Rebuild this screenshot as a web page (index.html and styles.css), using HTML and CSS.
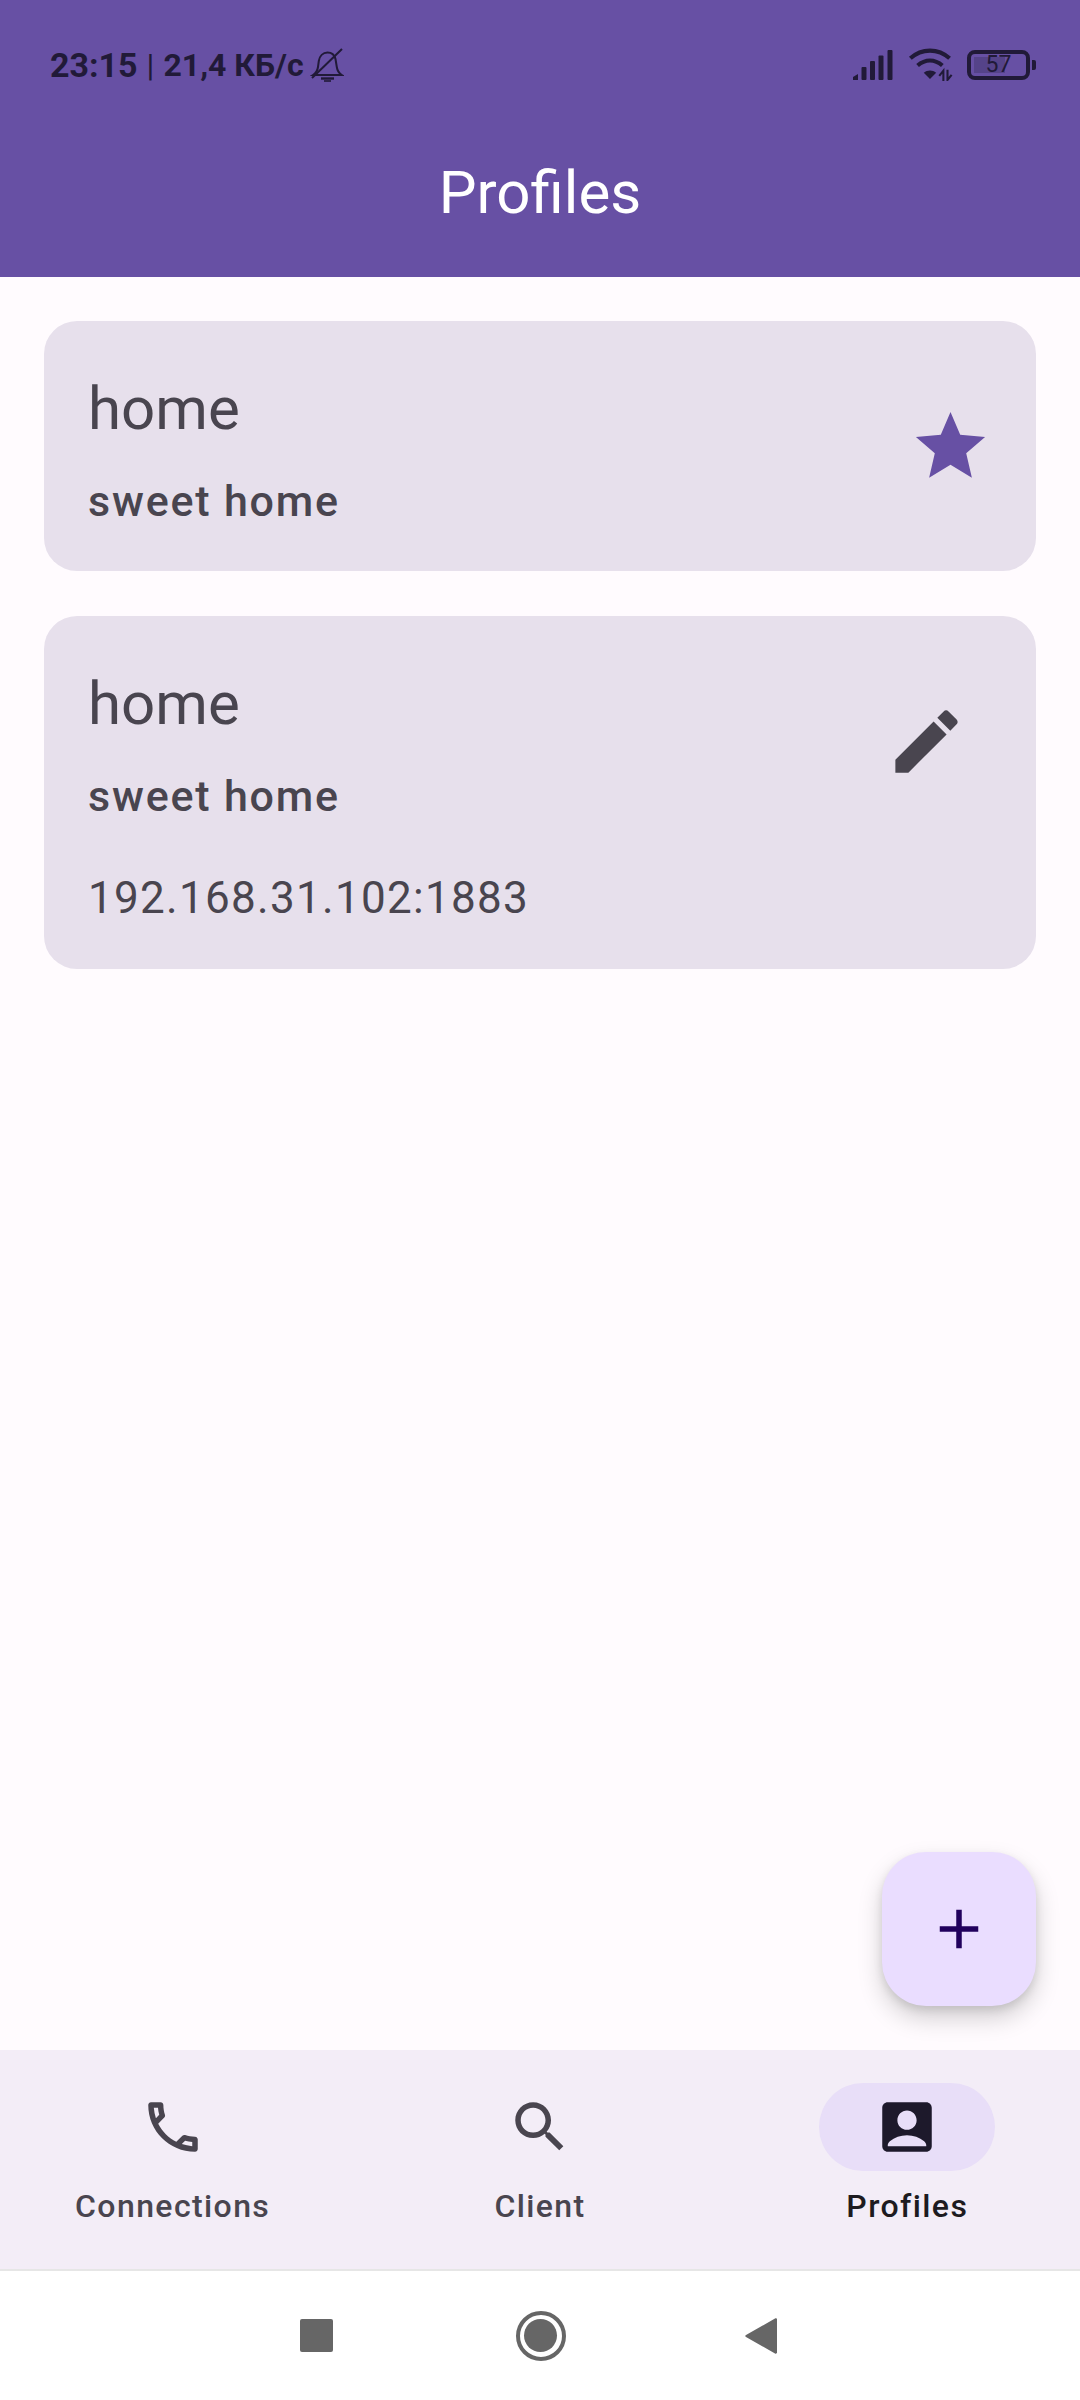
FILE: index.html
```html
<!DOCTYPE html>
<html lang="en">
<head>
    <meta charset="UTF-8">
    <meta name="viewport" content="width=device-width, initial-scale=1.0">
    <title>Profiles</title>
    <link rel="stylesheet" href="styles.css">
</head>
<body>

<div class="screen">
    <header class="app-header">
        <div class="status-bar">
            <div class="status-left">
                <span class="status-time">23:15</span>
                <span class="status-sep">|</span>
                <span class="status-speed">21,4 КБ/с</span>
                <svg class="bell-off" viewBox="0 0 34 34" fill="none" stroke="#211a38" stroke-width="2">
                    <path d="M3 27c3-2 4.500-4.500 5-8l.8-6C9.500 8 13 4.500 17.500 4.500c4 0 7 2.500 8 6.500l1.300 8c.5 3.500 1.800 6 5 8H3z"/>
                    <path d="M2 30 32 1"/>
                    <path d="M11 30.500h13" stroke-width="2.400"/>
                    <path d="M14 33h7" stroke-width="1.600"/>
                </svg>
            </div>
            <div class="status-right">
                <svg class="signal" viewBox="0 0 40 30" fill="#211a38">
                    <path d="M0 30v-3l5-3v6z"/>
                    <rect x="8.500" y="17" width="5" height="13" rx="1"/>
                    <rect x="17" y="11" width="5" height="19" rx="1"/>
                    <rect x="25.500" y="5.500" width="5" height="24.500" rx="1"/>
                    <rect x="34.500" y="0" width="5" height="30" rx="1"/>
                </svg>
                <svg class="wifi" viewBox="0 0 44 32" fill="none" stroke="#211a38" stroke-width="4">
                    <path d="M2 10C13 0 29 0 40 10"/>
                    <path d="M9 17c7.500-6.500 16.500-6.500 24 0"/>
                    <path d="M21 30l-6-6c3.500-3 8.500-3 12 0z" fill="#211a38" stroke="none"/>
                    <path d="M34 32v-10l-4 5M38 21v10l4-5" stroke-width="2"/>
                </svg>
                <div class="battery">
                    <div class="battery-body">
                        <div class="battery-fill"></div>
                        <span class="battery-text">57</span>
                    </div>
                    <div class="battery-nub"></div>
                </div>
            </div>
        </div>
        <h1 class="app-title">Profiles</h1>
    </header>

    <main class="content">
        <div class="card card-short">
            <div class="card-text">
                <div class="card-title">home</div>
                <div class="card-sub">sweet home</div>
            </div>
            <svg class="card-icon star" viewBox="0 0 24 24">
                <path d="M12 17.270 18.180 21l-1.640-7.030L22 9.240l-7.190-.61L12 2 9.190 8.630 2 9.240l5.460 4.730L5.820 21z"/>
            </svg>
        </div>
        <div class="card">
            <div class="card-text">
                <div class="card-title">home</div>
                <div class="card-sub">sweet home</div>
                <div class="card-addr">192.168.31.102:1883</div>
            </div>
            <svg class="card-icon pencil" viewBox="0 0 24 24">
                <path d="M3 17.250V21h3.750L17.810 9.940l-3.750-3.750L3 17.250zM20.710 7.040c.39-.39.39-1.020 0-1.410l-2.340-2.340c-.39-.39-1.020-.39-1.410 0l-1.830 1.830 3.750 3.750 1.830-1.830z"/>
            </svg>
        </div>
        <button class="fab">
            <svg viewBox="0 0 24 24"><path d="M19 13h-6v6h-2v-6H5v-2h6V5h2v6h6v2z"/></svg>
        </button>
    </main>

    <nav class="bottom-nav">
        <div class="nav-item">
            <div class="nav-pill">
                <svg viewBox="0 0 24 24"><path d="M6.540 5c.06.89.21 1.760.45 2.590l-1.200 1.200c-.41-1.200-.67-2.470-.76-3.790h1.510m9.860 12.020c.85.24 1.720.39 2.600.45v1.490c-1.320-.09-2.590-.35-3.800-.75l1.200-1.190M7.500 3H4c-.55 0-1 .45-1 1 0 9.390 7.610 17 17 17 .55 0 1-.45 1-1v-3.490c0-.55-.45-1-1-1-1.240 0-2.450-.2-3.570-.57-.1-.04-.21-.05-.31-.05-.26 0-.51.1-.71.29l-2.200 2.200c-2.830-1.450-5.150-3.760-6.590-6.590l2.200-2.200c.28-.28.36-.67.25-1.020C8.700 6.450 8.500 5.250 8.500 4c0-.55-.45-1-1-1z"/></svg>
            </div>
            <span class="nav-label">Connections</span>
        </div>
        <div class="nav-item">
            <div class="nav-pill">
                <svg viewBox="0 0 24 24"><path d="M15.500 14h-.79l-.28-.27C15.410 12.590 16 11.110 16 9.500 16 5.910 13.090 3 9.500 3S3 5.910 3 9.500 5.910 16 9.500 16c1.610 0 3.090-.59 4.230-1.570l.27.28v.79l5 4.990L20.490 19l-4.990-5zm-6 0C7.010 14 5 11.990 5 9.500S7.010 5 9.500 5 14 7.010 14 9.500 11.990 14 9.500 14z"/></svg>
            </div>
            <span class="nav-label">Client</span>
        </div>
        <div class="nav-item active">
            <div class="nav-pill">
                <svg viewBox="0 0 24 24"><path d="M19 3H5c-1.100 0-2 .9-2 2v14c0 1.100.9 2 2 2h14c1.100 0 2-.9 2-2V5c0-1.100-.9-2-2-2zm-7 3c1.930 0 3.500 1.570 3.500 3.500S13.930 13 12 13s-3.500-1.570-3.500-3.500S10.070 6 12 6zm7 13H5v-.23c0-.62.28-1.200.76-1.580C7.470 15.820 9.640 15 12 15s4.530.82 6.240 2.190c.48.38.76.97.76 1.580V19z"/></svg>
            </div>
            <span class="nav-label">Profiles</span>
        </div>
    </nav>

    <div class="system-nav">
        <div class="sys-square"></div>
        <div class="sys-home"><div class="sys-home-dot"></div></div>
        <svg class="sys-back" viewBox="0 0 32 38"><path d="M1 18 30 1.500c1-.5 2 0 2 1v33c0 1-1 1.500-2 1L1 20c-1-.5-1-1.500 0-2z"/></svg>
    </div>
</div>

</body>
</html>
```

FILE: styles.css
```css
* {
    box-sizing: border-box;
}
body {
    margin: 0;
    padding: 0;
    font-family: Roboto, sans-serif;
    background-color: #fffbfe;
}
.screen {
    width: 1080px;
    height: 2400px;
    display: flex;
    flex-direction: column;
    overflow: hidden;
}
.app-header {
    height: 277px;
    background: #6750a4;
    display: flex;
    flex-direction: column;
}
.status-bar {
    height: 129px;
    padding: 0 44px 0 50px;
    display: flex;
    justify-content: space-between;
    align-items: center;
    color: #211a38;
}
.status-left {
    display: flex;
    align-items: center;
    font-size: 32px;
    font-weight: 700;
}
.status-time {
    font-size: 34px;
}
.status-sep {
    font-weight: 400;
    font-size: 32px;
    margin: 0 9px;
}
.bell-off {
    width: 34px;
    height: 34px;
    margin-left: 6px;
}
.status-right {
    display: flex;
    align-items: center;
}
.signal {
    width: 40px;
    height: 30px;
}
.wifi {
    width: 46px;
    height: 33px;
    margin-left: 15px;
}
.battery {
    display: flex;
    align-items: center;
    margin-left: 13px;
}
.battery-body {
    position: relative;
    width: 63px;
    height: 30px;
    border: 4px solid #211a38;
    border-radius: 8px;
    display: flex;
    align-items: center;
    justify-content: center;
}
.battery-fill {
    position: absolute;
    left: 3px;
    top: 3px;
    bottom: 3px;
    width: 57%;
    background: rgba(33, 26, 56, 0.25);
}
.battery-text {
    position: relative;
    font-size: 23px;
    color: #211a38;
}
.battery-nub {
    width: 4px;
    height: 10px;
    margin-left: 2px;
    background: #211a38;
    border-radius: 0 2px 2px 0;
}
.app-title {
    margin: 0;
    text-align: center;
    color: white;
    font-size: 60px;
    font-weight: 400;
    line-height: 127px;
}
.content {
    position: relative;
    flex: 1;
    padding: 44px;
    display: flex;
    flex-direction: column;
    gap: 45px;
}
.card {
    background: #e7e0ec;
    border-radius: 33px;
    height: 353px;
    padding: 0 68px 0 44px;
    display: flex;
    justify-content: space-between;
    color: #49454f;
}
.card-short {
    height: 250px;
    padding-right: 44px;
    align-items: center;
}
.card-text {
    align-self: flex-start;
    padding-top: 48px;
}
.card-title {
    font-size: 60px;
    line-height: 80px;
}
.card-sub {
    font-size: 43px;
    font-weight: 500;
    letter-spacing: 1.800px;
    line-height: 60px;
    margin-top: 22px;
}
.card-addr {
    font-size: 44px;
    letter-spacing: 1.3px;
    line-height: 60px;
    margin-top: 42px;
}
.card-icon {
    width: 83px;
    height: 83px;
}
.star {
    fill: #6750a4;
}
.pencil {
    fill: #49454f;
    margin-top: 84px;
}
.fab {
    position: absolute;
    right: 44px;
    bottom: 44px;
    width: 154px;
    height: 154px;
    border: none;
    border-radius: 44px;
    background: #eaddff;
    box-shadow: 0 12px 24px rgba(0, 0, 0, 0.18), 0 4px 8px rgba(0, 0, 0, 0.1);
    display: flex;
    align-items: center;
    justify-content: center;
}
.fab svg {
    width: 66px;
    height: 66px;
    fill: #21005d;
}
.bottom-nav {
    height: 221px;
    background: #f3edf7;
    border-bottom: 2px solid #e6e6e6;
    display: flex;
    gap: 22px;
}
.nav-item {
    flex: 1;
    display: flex;
    flex-direction: column;
    align-items: center;
    padding-top: 33px;
    color: #49454f;
}
.nav-pill {
    width: 176px;
    height: 88px;
    border-radius: 44px;
    display: flex;
    align-items: center;
    justify-content: center;
}
.nav-pill svg {
    width: 66px;
    height: 66px;
    fill: #49454f;
}
.nav-label {
    font-size: 32px;
    font-weight: 500;
    letter-spacing: 1.4px;
    line-height: 44px;
    margin-top: 13px;
}
.active {
    color: #1d1b20;
}
.active .nav-pill {
    background: #e8def8;
}
.active .nav-pill svg {
    fill: #1d192b;
}
.system-nav {
    height: 129px;
    padding-right: 4px;
    background: #ffffff;
    display: flex;
    align-items: center;
    justify-content: center;
}
.sys-square {
    width: 33px;
    height: 33px;
    border-radius: 2px;
    background: #666666;
}
.sys-home {
    width: 50px;
    height: 50px;
    margin: 0 179px 0 183px;
    border: 4px solid #666666;
    border-radius: 50%;
    display: flex;
    align-items: center;
    justify-content: center;
}
.sys-home-dot {
    width: 33px;
    height: 33px;
    border-radius: 50%;
    background: #666666;
}
.sys-back {
    width: 32px;
    height: 38px;
    fill: #666666;
}
```
